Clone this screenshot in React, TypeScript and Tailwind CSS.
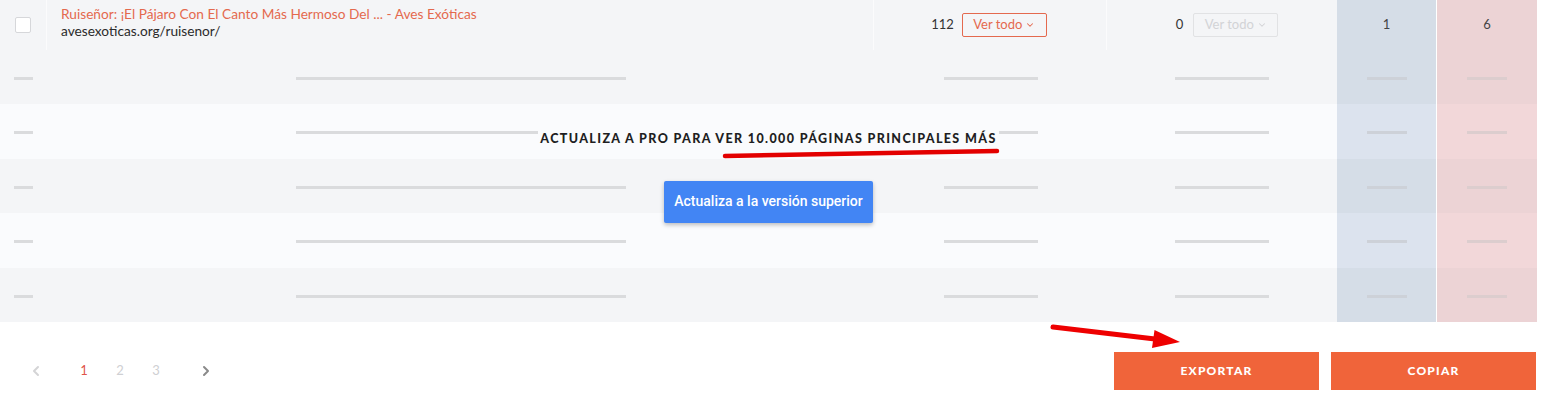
import { ChevronDown, ChevronLeft, ChevronRight } from 'lucide-react';

const ROWS = [
  { light: false },
  { light: true },
  { light: false },
  { light: true },
  { light: false },
];

const font = { fontFamily: 'Lato, "Noto Sans", sans-serif' };

const Dash = ({ w, tone = 'bg-[#dadbdd]' }: { w: string; tone?: string }) => (
  <div className={`h-[3px] ${w} ${tone}`} />
);

const PlaceholderRow = ({ light }: { light: boolean }) => (
  <div className={`flex h-[54.5px] ${light ? 'bg-[#fafbfd]' : 'bg-[#f4f5f7]'}`}>
    <div className="w-[47px] flex items-center justify-center pt-[3px]">
      <Dash w="w-[19px]" />
    </div>
    <div className="w-[827px] flex items-center justify-center pt-[3px]">
      <Dash w="w-[330px]" />
    </div>
    <div className="w-[233px] flex items-center justify-center pt-[3px]">
      <Dash w="w-[94px]" />
    </div>
    <div className="w-[230px] flex items-center justify-center pt-[3px]">
      <Dash w="w-[94px]" />
    </div>
    <div className={`w-[99px] flex items-center justify-center pt-[3px] ${light ? 'bg-[#dce3ee]' : 'bg-[#d5dde7]'}`}>
      <Dash w="w-[40px]" tone="bg-[#cdd1d8]" />
    </div>
    <div className="w-px bg-white" />
    <div className={`w-[100px] flex items-center justify-center pt-[3px] ${light ? 'bg-[#f2d7d9]' : 'bg-[#ecd3d5]'}`}>
      <Dash w="w-[40px]" tone="bg-[#dccdce]" />
    </div>
  </div>
);

const VerTodo = ({ active }: { active: boolean }) => (
  <button
    type="button"
    className={`flex items-center justify-center gap-[3px] w-[85px] h-[24px] rounded-[2px] border text-[13px] ${
      active ? 'border-[#e4694e] text-[#e4694e]' : 'border-[#e1e2e4] text-[#d2d3d6]'
    }`}
  >
    Ver todo
    <ChevronDown className="w-[10px] h-[10px] mt-px" strokeWidth={2.5} />
  </button>
);

export default function App() {
  return (
    <div className="relative w-full h-[416px] bg-white overflow-hidden" style={font}>
      <div className="w-[1537px]">
        {/* fila con datos */}
        <div className="flex h-[49.5px] bg-[#f4f5f7]">
          <div className="w-[47px] flex items-center justify-center border-r border-[#fbfbfc]">
            <span className="w-4 h-4 bg-white border border-[#d6d7da] rounded-[2px]" />
          </div>
          <div className="w-[827px] pl-[14px] pt-[5px] border-r border-[#fbfbfc] text-[13.7px] leading-[17px]">
            <a className="block text-[#e4694e]">
              Ruiseñor: ¡El Pájaro Con El Canto Más Hermoso Del ... - Aves Exóticas
            </a>
            <div className="text-[#2b2b2b]">avesexoticas.org/ruisenor/</div>
          </div>
          <div className="w-[233px] flex items-center justify-center gap-[8px] border-r border-[#fbfbfc] pr-[2px]">
            <span className="text-[13px] text-[#333]">112</span>
            <VerTodo active />
          </div>
          <div className="w-[230px] flex items-center justify-center gap-[10px] pl-[10px]">
            <span className="text-[13px] text-[#333]">0</span>
            <VerTodo active={false} />
          </div>
          <div className="w-[99px] flex items-center justify-center bg-[#d5dde7] text-[13px] text-[#444]">1</div>
          <div className="w-px bg-white" />
          <div className="w-[100px] flex items-center justify-center bg-[#ecd3d5] text-[13px] text-[#444]">6</div>
        </div>

        {/* filas bloqueadas */}
        <div className="relative">
          {ROWS.map((r, i) => (
            <PlaceholderRow key={i} light={r.light} />
          ))}

          <div className="absolute inset-x-0 top-[81px] flex flex-col items-center">
            <h3 className="bg-[#fafbfd] px-[2px] text-[12.5px] leading-[16px] font-black tracking-[0.11em] text-[#1e1e22]">
              ACTUALIZA A PRO PARA VER 10.000 PÁGINAS PRINCIPALES MÁS
            </h3>
            <button
              type="button"
              className="mt-[34px] w-[209px] h-[42px] rounded-[2px] bg-[#4285f4] text-white text-[14px] font-medium shadow-[0_2px_4px_rgba(0,0,0,0.25)]"
              style={{ fontFamily: 'Roboto, sans-serif' }}
            >
              Actualiza a la versión superior
            </button>
          </div>
        </div>

        {/* pie */}
        <div className="flex items-center justify-between h-[38px] mt-[30px] pr-px">
          <div className="flex items-center pl-[18px] text-[13px]">
            <span className="w-9 flex justify-center text-[#d4d4d6]">
              <ChevronLeft className="w-4 h-4" strokeWidth={3} />
            </span>
            <span className="w-9 ml-3 text-center text-[#e0554a]">1</span>
            <span className="w-9 text-center text-[#cfd0d3]">2</span>
            <span className="w-9 text-center text-[#cfd0d3]">3</span>
            <span className="w-9 ml-[14px] flex justify-center text-[#8a8a8a]">
              <ChevronRight className="w-4 h-4" strokeWidth={3} />
            </span>
          </div>
          <div className="flex gap-3">
            <button className="w-[205px] h-[38px] bg-[#f0643a] text-white text-[12px] font-black tracking-[0.1em]">
              EXPORTAR
            </button>
            <button className="w-[205px] h-[38px] bg-[#f0643a] text-white text-[12px] font-black tracking-[0.1em]">
              COPIAR
            </button>
          </div>
        </div>
      </div>

      {/* subrayado rojo */}
      <svg className="absolute left-[715px] top-[140px]" width="295" height="25" viewBox="0 0 295 25">
        <path d="M10 16 Q 140 14 282 11" stroke="#e30000" strokeWidth="4.5" strokeLinecap="round" fill="none" />
      </svg>

      {/* flecha roja */}
      <svg className="absolute left-[1040px] top-[315px]" width="150" height="40" viewBox="0 0 150 40">
        <line x1="13" y1="12" x2="115" y2="24" stroke="#ee0000" strokeWidth="5" strokeLinecap="round" />
        <polygon points="140,27 112,33 114.5,15" fill="#ee0000" />
      </svg>
    </div>
  );
}
